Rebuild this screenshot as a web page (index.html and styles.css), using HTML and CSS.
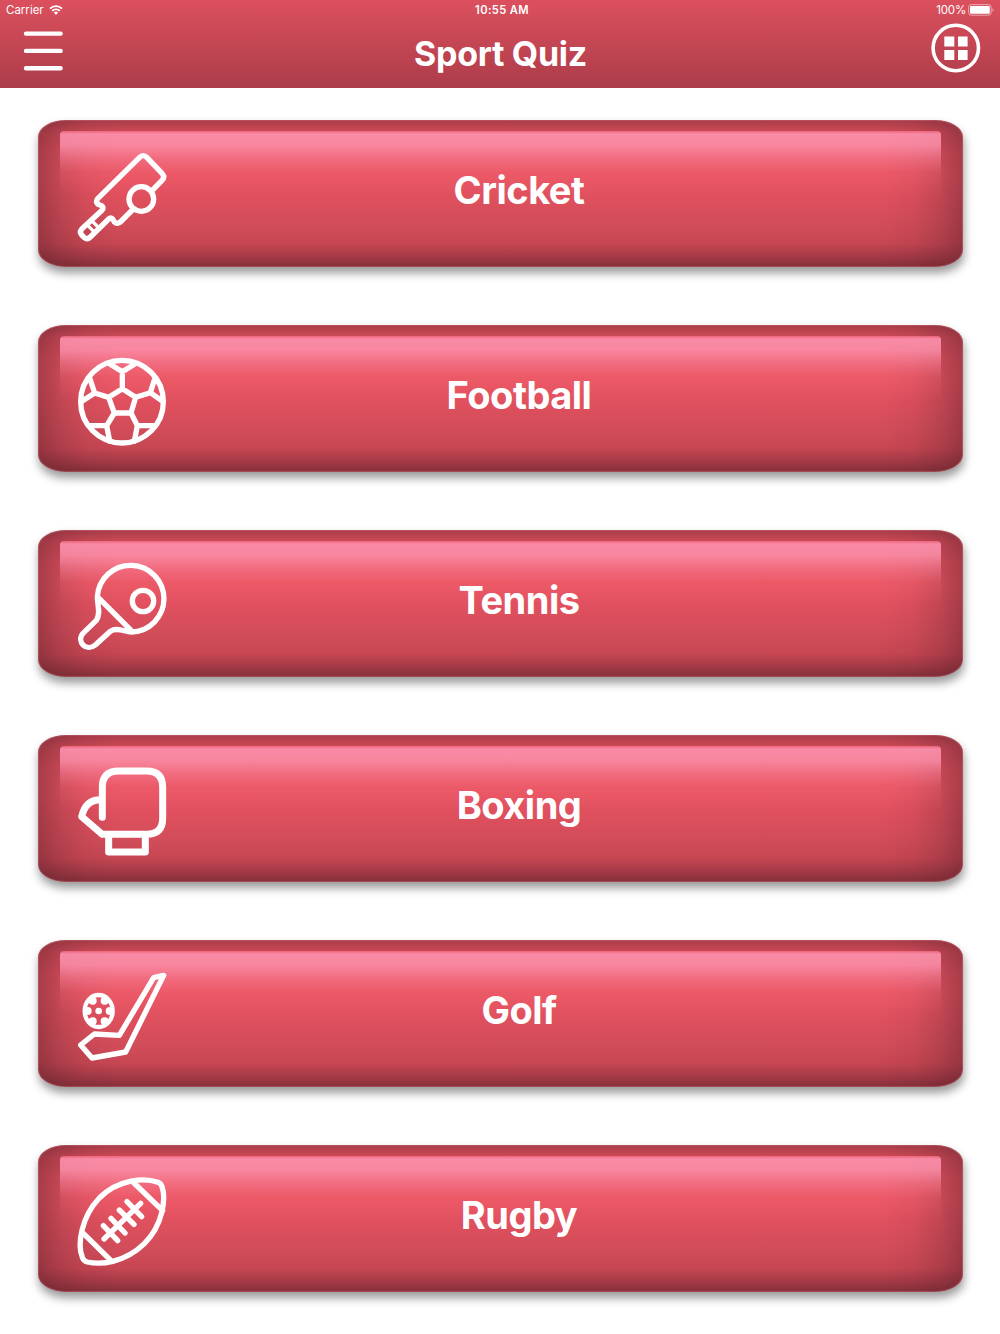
FILE: index.html
```html
<!DOCTYPE html>
<html lang="en">
<head>
  <meta charset="UTF-8">
  <meta name="viewport" content="width=device-width, initial-scale=1.0">
  <title>Sport Quiz</title>
  <link rel="stylesheet" href="styles.css">
</head>
<body>

  <header class="header">
    <div class="status-bar">
      <div class="carrier">
        <span>Carrier</span>
        <svg class="wifi" viewBox="0 0 14 10">
          <path d="M1 3.6a8.6 8.6 0 0 1 12 0M3.2 5.9a5.5 5.5 0 0 1 7.6 0" fill="none" stroke="#fff" stroke-width="1.9"/>
          <path d="M4.9 7.6a3 3 0 0 1 4.2 0L7 9.9z" fill="#fff"/>
        </svg>
      </div>
      <span class="clock">10:55 AM</span>
      <div class="battery">
        <span>100%</span>
        <svg class="battery-icon" viewBox="0 0 26 12">
          <rect x="0.6" y="0.6" width="22.6" height="10.6" rx="2.8" fill="none" stroke="#fff" stroke-opacity=".5" stroke-width="1"/>
          <rect x="2" y="2" width="19.8" height="7.8" rx="1.3" fill="#fff"/>
          <path d="M24.4 4.2v3.6q1.2-.6 1.2-1.8t-1.2-1.8z" fill="#fff" fill-opacity=".5"/>
        </svg>
      </div>
    </div>
    <div class="nav">
      <button class="menu-btn" aria-label="Menu">
        <svg viewBox="0 0 40 40"><path d="M3 2.6h34.6M3 19.9h34.6M3 37.2h34.6" stroke="#fff" stroke-width="4.4" stroke-linecap="round"/></svg>
      </button>
      <h1>Sport Quiz</h1>
      <button class="grid-btn" aria-label="More">
        <svg viewBox="0 0 50 50">
          <circle cx="24.8" cy="25" r="22.7" fill="none" stroke="#fff" stroke-width="3.6"/>
          <path d="M13.3 13.5h10v10h-10zM27 13.5h9.6v10H27zM13.3 27h10v10h-10zM27 27h9.6v10H27z" fill="#fff"/>
        </svg>
      </button>
    </div>
  </header>

  <main class="list">
    <a class="card">
      <svg class="icon" viewBox="159 127 264 264">
        <path d="M381 240L411 209Q421 199 412 189L366 141Q355 129 343 141L218 264Q211 273 219 281L230 285Q238 291 231 299L171 354Q162 364 170 373L178 381Q187 388 196 379L251 325Q257 319 263 325L268 334Q276 341 286 334L325 295"/>
        <path d="M185 341L209 365M198 328L222 352" stroke-width="10"/>
        <circle cx="349" cy="265" r="37"/>
      </svg>
      <span class="label">Cricket</span>
    </a>
    <a class="card">
      <svg class="icon" viewBox="39 39 264 264">
        <circle cx="171" cy="170" r="124"/>
        <path d="M172 131L212 157L198 204H148L131 157ZM172 131V80M136 58L172 80L208 58M131 157L89 144L74 99M89 144L52 168M212 157L256 143L270 99M256 143L292 168M148 204L125 242L134 289M125 242H75M198 204L217 242L208 289M217 242H268"/>
      </svg>
      <span class="label">Football</span>
    </a>
    <a class="card">
      <svg class="icon" viewBox="39 39 264 264">
        <path d="M97 140A100 100 0 1 1 199 246C178 245 155 231 136 244L91 285C64 307 33 275 54 250L94 211C109 190 96 162 97 140L199 242"/>
        <circle cx="234" cy="153" r="32"/>
      </svg>
      <span class="label">Tennis</span>
    </a>
    <a class="card">
      <svg class="icon glove" viewBox="39 39 264 264">
        <path d="M112 187V96Q112 48 160 48H245Q293 48 293 96V190Q293 238 245 238H112L50 185Q61 134 106 134M131 240V291H241V240"/>
      </svg>
      <span class="label">Boxing</span>
    </a>
    <a class="card">
      <svg class="icon" viewBox="39 39 264 264">
        <path d="M296 46L266 53L163 226L88 222L47 255L81 294L182 276Z"/>
        <ellipse cx="101" cy="153" rx="42" ry="48" stroke-width="13"/>
        <g class="dots">
          <circle cx="101" cy="153" r="10"/>
          <circle cx="68" cy="153" r="12"/>
          <circle cx="134" cy="153" r="12"/>
          <circle cx="83" cy="122" r="12"/>
          <circle cx="119" cy="122" r="12"/>
          <circle cx="83" cy="184" r="12"/>
          <circle cx="119" cy="184" r="12"/>
        </g>
      </svg>
      <span class="label">Golf</span>
    </a>
    <a class="card">
      <svg class="icon" viewBox="39 39 264 264">
        <path d="M279 52C240 37 160 42 103 99C47 158 37 240 52 277Q56 288 67 291C105 299 176 296 238 236C295 178 303 100 291 65Q288 55 279 52ZM207 54L293 137M52 202L138 287M117 222L227 115M115 182L158 227M138 160L180 204M163 135L207 178M186 110L230 155"/>
      </svg>
      <span class="label">Rugby</span>
    </a>
  </main>

</body>
</html>
```
FILE: styles.css
```css
* {
  box-sizing: border-box;
}

body {
  margin: 0;
  background: #fff;
  color: #fff;
  font-family: Inter, "Liberation Sans", sans-serif;
  height: 1334px;
  overflow: hidden;
}

.header {
  height: 88px;
  background: linear-gradient(#dc505e, #ac3c49);
}

.status-bar {
  display: grid;
  grid-template-columns: 1fr auto 1fr;
  align-items: center;
  height: 20px;
  padding: 0 6px;
  font-size: 11.5px;
}

.carrier, .battery {
  display: flex;
  align-items: center;
  gap: 5px;
}

.battery {
  justify-content: flex-end;
  gap: 2px;
  letter-spacing: -0.2px;
}

.clock {
  font-weight: 600;
  font-size: 11.2px;
  letter-spacing: 0.35px;
  padding-left: 4px;
}

.wifi {
  width: 14px;
  height: 10px;
}

.battery-icon {
  width: 26px;
  height: 12px;
}

.nav {
  display: flex;
  justify-content: space-between;
  align-items: flex-start;
  padding: 3px 19px 0 23px;
}

.nav h1 {
  margin: 10px 0 0 7px;
  font-size: 34px;
  line-height: 42px;
  font-weight: 700;
  letter-spacing: -0.3px;
}

.nav button {
  padding: 0;
  border: none;
  background: none;
  cursor: pointer;
}

.nav svg {
  display: block;
}

.menu-btn {
  width: 40px;
  margin-top: 8px;
}

.grid-btn {
  width: 50px;
}

.list {
  display: flex;
  flex-direction: column;
  gap: 58px;
  padding: 32px 37px 0 38px;
}

/* glossy strip, dark sides, then the base colour */
.card {
  position: relative;
  display: flex;
  align-items: center;
  height: 147px;
  flex-shrink: 0;
  padding: 7px 91px 0 40px;
  border-radius: 28px / 17px;
  background:
    linear-gradient(90deg, rgba(80, 28, 38, 0.42), rgba(80, 28, 38, 0.22) 22px, rgba(80, 28, 38, 0.07) 48px, transparent 80px),
    linear-gradient(270deg, rgba(80, 28, 38, 0.42), rgba(80, 28, 38, 0.22) 22px, rgba(80, 28, 38, 0.07) 48px, transparent 80px),
    linear-gradient(#a93c48, #cd4a57 8%, #e45260 22%, #e75462 38%, #e0505e 52%, #d14c59 72%, #c64652 84%, #a33a46 93%, #842f39);
  box-shadow:
    inset 0 0 1px 1px rgba(200, 110, 120, 0.5),
    1px 6px 10px rgba(0, 0, 0, 0.4);
}

.card::before {
  content: "";
  position: absolute;
  top: 11px;
  left: 22px;
  right: 22px;
  height: 64px;
  border-radius: 4px 4px 0 0;
  background: linear-gradient(rgba(255, 110, 135, 0.7), rgba(255, 148, 178, 0.88) 3px, rgba(255, 148, 175, 0.8) 22%, rgba(255, 135, 160, 0.5) 42%, rgba(255, 110, 125, 0.2) 65%, rgba(255, 100, 115, 0));
}

.icon {
  position: relative;
  width: 88px;
  height: 88px;
  flex-shrink: 0;
  overflow: visible;
  fill: none;
  stroke: #fff;
  stroke-width: 16;
  stroke-linecap: round;
  stroke-linejoin: round;
}

.glove {
  stroke-width: 21;
}

.dots {
  fill: #fff;
  stroke: none;
}

.label {
  position: relative;
  flex: 1;
  margin-bottom: 14px;
  text-align: center;
  font-size: 38px;
  font-weight: 700;
  letter-spacing: -0.5px;
}
```
